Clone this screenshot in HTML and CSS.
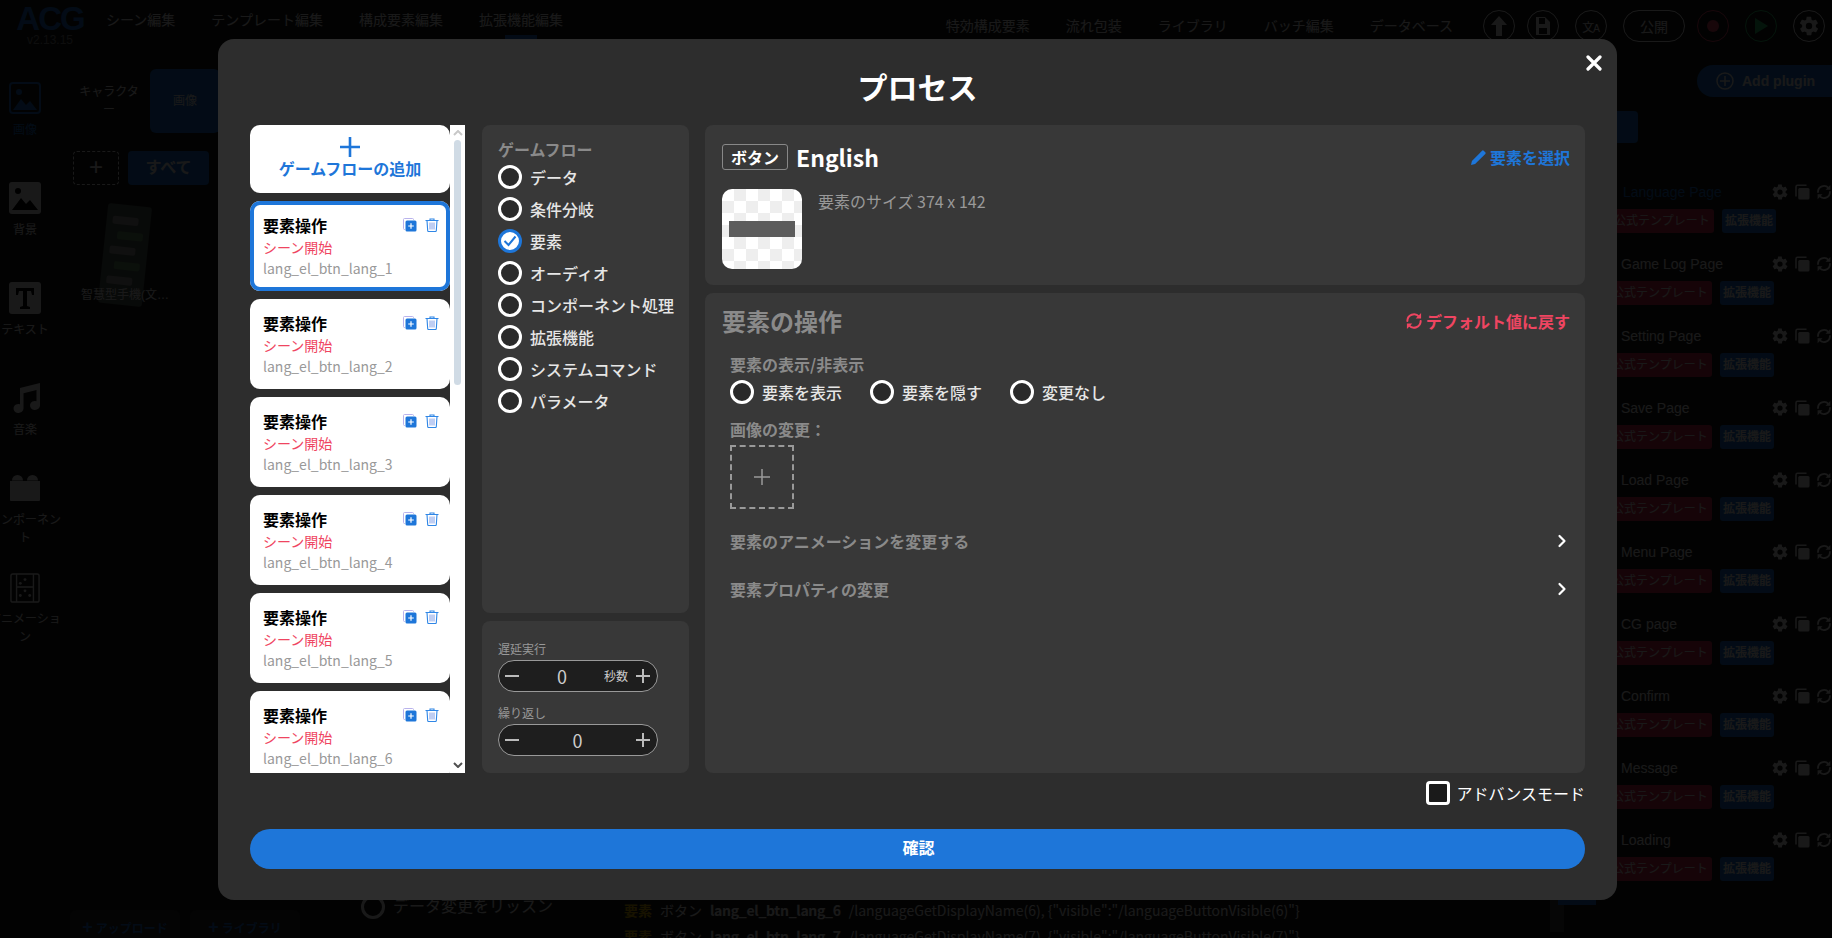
FILE: index.html
```html
<!DOCTYPE html>
<html lang="ja">
<head>
<meta charset="utf-8">
<title>プロセス</title>
<link rel="stylesheet" href="styles.css">
</head>
<body>
<svg class="defs" width="0" height="0" aria-hidden="true">
  <defs>
    <symbol id="gear" viewBox="0 0 24 24"><path fill="currentColor" d="M19.4 13c.1-.3.1-.7.1-1s0-.7-.1-1l2.1-1.6c.2-.2.2-.4.1-.6l-2-3.5c-.1-.2-.4-.3-.6-.2l-2.5 1c-.5-.4-1.1-.7-1.7-1l-.4-2.6c0-.3-.2-.5-.5-.5h-4c-.3 0-.5.2-.5.4l-.4 2.7c-.6.2-1.2.6-1.7 1l-2.5-1c-.2-.1-.5 0-.6.2l-2 3.5c-.1.2-.1.5.1.6L4.6 11c-.1.3-.1.7-.1 1s0 .7.1 1l-2.1 1.600c-.2.2-.2.4-.1.6l2 3.5c.1.2.4.3.6.2l2.5-1c.5.4 1.1.7 1.700 1l.4 2.600c0 .3.2.5.5.5h4c.3 0 .5-.2.5-.4l.4-2.700c.6-.2 1.2-.6 1.700-1l2.500 1c.2.1.5 0 .6-.2l2-3.500c.1-.2.1-.5-.1-.6zM12 15.500a3.500 3.500 0 1 1 0-7 3.500 3.500 0 0 1 0 7z"/></symbol>
    <symbol id="refresh" viewBox="0 0 24 24"><path fill="none" stroke="currentColor" stroke-width="2.400" stroke-linecap="round" d="M4 12a8 8 0 0 1 14-5.300M20 12a8 8 0 0 1-14 5.300"/><path fill="currentColor" d="M20.500 2.500v6.500H14zM3.500 21.500V15H10z"/></symbol>
    <symbol id="copy" viewBox="0 0 24 24"><path fill="none" stroke="currentColor" stroke-width="2" d="M4 18V5a2 2 0 0 1 2-2h12"/><rect x="7" y="6.500" width="15" height="15.500" rx="2" fill="currentColor"/></symbol>
    <symbol id="copyblue" viewBox="0 0 14 14"><path fill="none" stroke="#b9b3ec" stroke-width="1" d="M2 11.500H1.500a1 1 0 0 1-1-1v-9a1 1 0 0 1 1-1h8a1 1 0 0 1 1 1V2"/><rect x="2.500" y="2.500" width="11" height="11" rx="1.500" fill="#1e76d9"/><path stroke="#fff" stroke-width="1.200" d="M8 5.200v5.600M5.200 8h5.600"/></symbol>
    <symbol id="trash" viewBox="0 0 14 14"><path fill="none" stroke="#2f86e6" stroke-width="1.100" d="M.5 2.500h13M5 2.500V1h4v1.500M2 2.500l.7 10.300c0 .4.400.7.800.7h7c.4 0 .8-.3.8-.7L12 2.500"/><path stroke="#7f9ce6" stroke-width="1" d="M5 4.500v7M7 4.500v7M9 4.500v7"/></symbol>
    <symbol id="chev" viewBox="0 0 12 16"><path fill="none" stroke="currentColor" stroke-width="2.200" stroke-linecap="round" stroke-linejoin="round" d="M3.500 3l5 5-5 5"/></symbol>
  </defs>
</svg>

<div class="app">
  <header class="topbar">
    <div class="logo">
      <span class="logo-mark">ACG</span>
      <span class="logo-ver">v2.13.15</span>
    </div>
    <nav class="nav-left">
      <span>シーン編集</span>
      <span>テンプレート編集</span>
      <span>構成要素編集</span>
      <span class="nav-active">拡張機能編集</span>
    </nav>
    <nav class="nav-right">
      <span>特効構成要素</span>
      <span>流れ包装</span>
      <span>ライブラリ</span>
      <span>バッチ編集</span>
      <span>データベース</span>
    </nav>
    <div class="tools">
      <span class="tool tool-tight"><svg width="18" height="22" viewBox="0 0 18 22"><path fill="currentColor" d="M9 1l8 9h-5v11H6V10H1z"/></svg></span>
      <span class="tool"><svg width="16" height="20" viewBox="0 0 16 20"><path fill="currentColor" fill-rule="evenodd" d="M1 1h9l5 5v13H1zM4 2v6h6V2zM4 12v6h8v-6z"/></svg></span>
      <span class="tool tool-text">文<small>A</small></span>
      <span class="tool tool-pub tool-tight">公開</span>
      <span class="tool tool-red"><svg width="14" height="14" viewBox="0 0 14 14"><circle cx="7" cy="7" r="6" fill="currentColor"/></svg></span>
      <span class="tool tool-green"><svg width="16" height="18" viewBox="0 0 16 18"><path fill="currentColor" d="M2 1l13 8-13 8z"/></svg></span>
      <span class="tool"><svg width="22" height="22"><use href="#gear"/></svg></span>
    </div>
  </header>

  <div class="workspace">
    <aside class="rail">
      <div class="rail-item rail-on">
        <svg width="32" height="32" viewBox="0 0 32 32"><rect x="1" y="1" width="30" height="30" rx="3" fill="none" stroke="currentColor" stroke-width="2"/><circle cx="10" cy="10" r="3" fill="currentColor"/><path fill="currentColor" d="M4 28l8-11 5 6 4-4 7 9z"/></svg>
        <span>画像</span>
      </div>
      <div class="rail-item">
        <svg width="32" height="32" viewBox="0 0 32 32"><rect width="32" height="32" rx="3" fill="currentColor"/><circle cx="9" cy="9" r="3" fill="#000"/><path fill="#000" d="M3 28l9-12 5 6 4-4 8 10z"/></svg>
        <span>背景</span>
      </div>
      <div class="rail-item">
        <svg width="32" height="32" viewBox="0 0 32 32"><rect width="32" height="32" rx="3" fill="currentColor"/><path fill="#000" d="M7 6h18v7h-2l-1-4h-4v15l3 1v2H11v-2l3-1V9h-4l-1 4H7z"/></svg>
        <span>テキスト</span>
      </div>
      <div class="rail-item rail-short">
        <svg width="32" height="32" viewBox="0 0 32 32"><path fill="currentColor" d="M11 6l20-5v22.500a5 4.500 0 1 1-3.500-4.300V8l-13 3.200v15.300a5 4.500 0 1 1-3.500-4.300z"/></svg>
        <span>音楽</span>
      </div>
      <div class="rail-item rail-lego">
        <svg width="30" height="26" viewBox="0 3 30 26"><path fill="currentColor" d="M0 9h30v19a1 1 0 0 1-1 1H1a1 1 0 0 1-1-1zM2 8.500a5.500 5.500 0 0 1 11 0zM17 8.500a5.500 5.500 0 0 1 11 0z"/></svg>
        <span>コンポーネント</span>
      </div>
      <div class="rail-item">
        <svg width="30" height="30" viewBox="0 0 32 32"><rect x="1" y="1" width="30" height="30" rx="2" fill="none" stroke="currentColor" stroke-width="1.500"/><path stroke="currentColor" stroke-width="1.500" d="M7 1v30M25 1v30M7 15h18"/><circle cx="16" cy="7" r="1.500" fill="currentColor"/><circle cx="11" cy="11" r="1.500" fill="currentColor"/><circle cx="16" cy="19" r="1.500" fill="currentColor"/><circle cx="11" cy="24" r="1.500" fill="currentColor"/><circle cx="21" cy="24" r="1.500" fill="currentColor"/></svg>
        <span>アニメーション</span>
      </div>
    </aside>

    <section class="assets">
      <div class="asset-tabs">
        <span class="asset-tab">キャラクター</span>
        <span class="asset-tab asset-tab-on">画像</span>
      </div>
      <div class="asset-filter">
        <span class="asset-add">+</span>
        <span class="asset-all">すべて</span>
      </div>
      <div class="asset-thumb">
        <div class="phone"><i></i><i class="bubble-green"></i><i></i><i class="bubble-green"></i><i></i></div>
        <span class="asset-name">智慧型手機(文…</span>
      </div>
      <div class="asset-actions">
        <span class="asset-btn"><b class="asset-plus">+</b>アップロード</span>
        <span class="asset-btn"><b class="asset-plus">+</b>ライブラリ</span>
      </div>
    </section>

    <section class="logs">
      <div class="listen"><span class="listen-radio"></span>データ変更をリッスン</div>
      <div class="log-lines">
        <p class="log-line"><b class="log-key">要素</b><span>ボタン</span><b class="log-id">lang_el_btn_lang_6</b><span>/languageGetDisplayName(6), {"visible":"/languageButtonVisible(6)"}</span></p>
        <p class="log-line"><b class="log-key">要素</b><span>ボタン</span><b class="log-id">lang_el_btn_lang_7</b><span>/languageGetDisplayName(7), {"visible":"/languageButtonVisible(7)"}</span></p>
      </div>
      <div class="log-scroll"></div>
      <div class="log-blue"></div>
    </section>

    <aside class="plugins">
      <div class="add-plugin">
        <svg width="18" height="18" viewBox="0 0 18 18"><circle cx="9" cy="9" r="8" fill="none" stroke="currentColor" stroke-width="1.500"/><path stroke="currentColor" stroke-width="1.500" d="M9 4v10M4 9h10"/></svg>
        <span>Add plugin</span>
      </div>
      <div class="plugin-blue"></div>
      <div class="plugin-list">
        <div class="plugin plugin-first">
          <div class="plugin-head"><span class="plugin-name plugin-name-on">Language Page</span><svg width="18" height="18"><use href="#gear"/></svg><svg width="18" height="18"><use href="#copy"/></svg><svg width="18" height="18"><use href="#refresh"/></svg></div>
          <div class="plugin-tags"><span class="tag-red">公式テンプレート</span><span class="tag-blue">拡張機能</span></div>
        </div>
        <div class="plugin">
          <div class="plugin-head"><span class="plugin-name">Game Log Page</span><svg width="18" height="18"><use href="#gear"/></svg><svg width="18" height="18"><use href="#copy"/></svg><svg width="18" height="18"><use href="#refresh"/></svg></div>
          <div class="plugin-tags"><span class="tag-red">公式テンプレート</span><span class="tag-blue">拡張機能</span></div>
        </div>
        <div class="plugin">
          <div class="plugin-head"><span class="plugin-name">Setting Page</span><svg width="18" height="18"><use href="#gear"/></svg><svg width="18" height="18"><use href="#copy"/></svg><svg width="18" height="18"><use href="#refresh"/></svg></div>
          <div class="plugin-tags"><span class="tag-red">公式テンプレート</span><span class="tag-blue">拡張機能</span></div>
        </div>
        <div class="plugin">
          <div class="plugin-head"><span class="plugin-name">Save Page</span><svg width="18" height="18"><use href="#gear"/></svg><svg width="18" height="18"><use href="#copy"/></svg><svg width="18" height="18"><use href="#refresh"/></svg></div>
          <div class="plugin-tags"><span class="tag-red">公式テンプレート</span><span class="tag-blue">拡張機能</span></div>
        </div>
        <div class="plugin">
          <div class="plugin-head"><span class="plugin-name">Load Page</span><svg width="18" height="18"><use href="#gear"/></svg><svg width="18" height="18"><use href="#copy"/></svg><svg width="18" height="18"><use href="#refresh"/></svg></div>
          <div class="plugin-tags"><span class="tag-red">公式テンプレート</span><span class="tag-blue">拡張機能</span></div>
        </div>
        <div class="plugin">
          <div class="plugin-head"><span class="plugin-name">Menu Page</span><svg width="18" height="18"><use href="#gear"/></svg><svg width="18" height="18"><use href="#copy"/></svg><svg width="18" height="18"><use href="#refresh"/></svg></div>
          <div class="plugin-tags"><span class="tag-red">公式テンプレート</span><span class="tag-blue">拡張機能</span></div>
        </div>
        <div class="plugin">
          <div class="plugin-head"><span class="plugin-name">CG page</span><svg width="18" height="18"><use href="#gear"/></svg><svg width="18" height="18"><use href="#copy"/></svg><svg width="18" height="18"><use href="#refresh"/></svg></div>
          <div class="plugin-tags"><span class="tag-red">公式テンプレート</span><span class="tag-blue">拡張機能</span></div>
        </div>
        <div class="plugin">
          <div class="plugin-head"><span class="plugin-name">Confirm</span><svg width="18" height="18"><use href="#gear"/></svg><svg width="18" height="18"><use href="#copy"/></svg><svg width="18" height="18"><use href="#refresh"/></svg></div>
          <div class="plugin-tags"><span class="tag-red">公式テンプレート</span><span class="tag-blue">拡張機能</span></div>
        </div>
        <div class="plugin">
          <div class="plugin-head"><span class="plugin-name">Message</span><svg width="18" height="18"><use href="#gear"/></svg><svg width="18" height="18"><use href="#copy"/></svg><svg width="18" height="18"><use href="#refresh"/></svg></div>
          <div class="plugin-tags"><span class="tag-red">公式テンプレート</span><span class="tag-blue">拡張機能</span></div>
        </div>
        <div class="plugin">
          <div class="plugin-head"><span class="plugin-name">Loading</span><svg width="18" height="18"><use href="#gear"/></svg><svg width="18" height="18"><use href="#copy"/></svg><svg width="18" height="18"><use href="#refresh"/></svg></div>
          <div class="plugin-tags"><span class="tag-red">公式テンプレート</span><span class="tag-blue">拡張機能</span></div>
        </div>
      </div>
    </aside>
  </div>
</div>

<div class="overlay">
  <div class="modal">
    <button class="close" type="button" aria-label="閉じる"><svg width="16" height="16" viewBox="0 0 16 16"><path stroke="#fff" stroke-width="3.200" stroke-linecap="round" d="M2 2l12 12M14 2L2 14"/></svg></button>
    <h1 class="modal-title">プロセス</h1>
    <div class="modal-body">
      <div class="flow-list">
        <div class="flow-items">
          <div class="flow-add">
            <svg width="20" height="20" viewBox="0 0 20 20"><path stroke="#1e76d9" stroke-width="2.600" d="M10 0v20M0 10h20"/></svg>
            <span>ゲームフローの追加</span>
          </div>
          <div class="flow-card flow-card-on">
            <div class="flow-top"><b>要素操作</b><span class="flow-icons"><svg width="14" height="14"><use href="#copyblue"/></svg><svg width="14" height="14"><use href="#trash"/></svg></span></div>
            <div class="flow-scene">シーン開始</div>
            <div class="flow-name">lang_el_btn_lang_1</div>
          </div>
          <div class="flow-card">
            <div class="flow-top"><b>要素操作</b><span class="flow-icons"><svg width="14" height="14"><use href="#copyblue"/></svg><svg width="14" height="14"><use href="#trash"/></svg></span></div>
            <div class="flow-scene">シーン開始</div>
            <div class="flow-name">lang_el_btn_lang_2</div>
          </div>
          <div class="flow-card">
            <div class="flow-top"><b>要素操作</b><span class="flow-icons"><svg width="14" height="14"><use href="#copyblue"/></svg><svg width="14" height="14"><use href="#trash"/></svg></span></div>
            <div class="flow-scene">シーン開始</div>
            <div class="flow-name">lang_el_btn_lang_3</div>
          </div>
          <div class="flow-card">
            <div class="flow-top"><b>要素操作</b><span class="flow-icons"><svg width="14" height="14"><use href="#copyblue"/></svg><svg width="14" height="14"><use href="#trash"/></svg></span></div>
            <div class="flow-scene">シーン開始</div>
            <div class="flow-name">lang_el_btn_lang_4</div>
          </div>
          <div class="flow-card">
            <div class="flow-top"><b>要素操作</b><span class="flow-icons"><svg width="14" height="14"><use href="#copyblue"/></svg><svg width="14" height="14"><use href="#trash"/></svg></span></div>
            <div class="flow-scene">シーン開始</div>
            <div class="flow-name">lang_el_btn_lang_5</div>
          </div>
          <div class="flow-card">
            <div class="flow-top"><b>要素操作</b><span class="flow-icons"><svg width="14" height="14"><use href="#copyblue"/></svg><svg width="14" height="14"><use href="#trash"/></svg></span></div>
            <div class="flow-scene">シーン開始</div>
            <div class="flow-name">lang_el_btn_lang_6</div>
          </div>
        </div>
        <div class="flow-scroll">
          <svg class="flow-arrow" width="10" height="6" viewBox="0 0 10 6"><path fill="none" stroke="#c8c8c8" stroke-width="2" d="M1 5l4-4 4 4"/></svg>
          <div class="flow-thumb"></div>
          <svg class="flow-arrow flow-arrow-down" width="10" height="6" viewBox="0 0 10 6"><path fill="none" stroke="#505050" stroke-width="2" d="M1 1l4 4 4-4"/></svg>
        </div>
      </div>

      <div class="mid">
        <div class="panel types">
          <div class="types-title">ゲームフロー</div>
          <label class="radio-row"><span class="radio"></span>データ</label>
          <label class="radio-row"><span class="radio"></span>条件分岐</label>
          <label class="radio-row"><span class="radio radio-on"><svg width="14" height="12" viewBox="0 0 14 12"><path fill="none" stroke="#1e76d9" stroke-width="2" d="M1.500 6l4 4 7-8.500"/></svg></span>要素</label>
          <label class="radio-row"><span class="radio"></span>オーディオ</label>
          <label class="radio-row"><span class="radio"></span>コンポーネント処理</label>
          <label class="radio-row"><span class="radio"></span>拡張機能</label>
          <label class="radio-row"><span class="radio"></span>システムコマンド</label>
          <label class="radio-row"><span class="radio"></span>パラメータ</label>
        </div>
        <div class="panel timing">
          <div class="step-label">遅延実行</div>
          <div class="stepper">
            <svg width="14" height="2"><rect width="14" height="2" fill="#bbb"/></svg>
            <span class="step-val step-val-left">0</span>
            <span class="step-unit">秒数</span>
            <svg width="14" height="14"><path stroke="#bbb" stroke-width="2" d="M7 0v14M0 7h14"/></svg>
          </div>
          <div class="step-label step-label-second">繰り返し</div>
          <div class="stepper">
            <svg width="14" height="2"><rect width="14" height="2" fill="#bbb"/></svg>
            <span class="step-val">0</span>
            <svg width="14" height="14"><path stroke="#bbb" stroke-width="2" d="M7 0v14M0 7h14"/></svg>
          </div>
        </div>
      </div>

      <div class="right">
        <div class="panel element">
          <div class="element-head">
            <span class="element-tag">ボタン</span>
            <span class="element-name">English</span>
            <span class="element-pick"><svg width="16" height="16" viewBox="0 0 14 14"><path fill="#1e76d9" d="M0 14l.8-3.600L9.700 1.500a1 1 0 0 1 1.400 0l1.400 1.400a1 1 0 0 1 0 1.400L3.600 13.200z"/></svg>要素を選択</span>
          </div>
          <div class="element-info">
            <div class="thumb"><div class="thumb-bar"></div></div>
            <span class="element-size">要素のサイズ 374 x 142</span>
          </div>
        </div>
        <div class="panel ops">
          <div class="ops-head">
            <h2>要素の操作</h2>
            <span class="ops-reset"><svg width="20" height="20"><use href="#refresh"/></svg>デフォルト値に戻す</span>
          </div>
          <div class="ops-label">要素の表示/非表示</div>
          <div class="ops-radios">
            <label class="radio-row"><span class="radio"></span>要素を表示</label>
            <label class="radio-row"><span class="radio"></span>要素を隠す</label>
            <label class="radio-row"><span class="radio"></span>変更なし</label>
          </div>
          <div class="ops-label ops-label-image">画像の変更：</div>
          <div class="upload"><svg width="16" height="16"><path stroke="#999" stroke-width="1.500" d="M8 0v16M0 8h16"/></svg></div>
          <div class="ops-row ops-row-first"><span>要素のアニメーションを変更する</span><svg width="12" height="16"><use href="#chev"/></svg></div>
          <div class="ops-row ops-row-last"><span>要素プロパティの変更</span><svg width="12" height="16"><use href="#chev"/></svg></div>
        </div>
      </div>
    </div>
    <label class="advanced"><span class="check"></span>アドバンスモード</label>
    <button class="confirm" type="button">確認</button>
  </div>
</div>
</body>
</html>
```
FILE: styles.css
```css
* { box-sizing: border-box; }
html, body { margin: 0; height: 100%; overflow: hidden; }
body {
  background: #1a1a1a;
  color: #fff;
  font-family: "Liberation Sans", "Noto Sans CJK JP", sans-serif;
}
.defs { position: absolute; }

/* Dimmed application behind the dialog */
.app { height: 938px; display: flex; flex-direction: column; overflow: hidden; }
.topbar { height: 64px; flex: none; display: flex; align-items: flex-start; }
.logo { width: 106px; flex: none; display: flex; flex-direction: column; align-items: center; padding: 5px 6px 0 0; }
.logo-mark { font-size: 33px; line-height: 28px; font-weight: 700; color: #1e76d9; letter-spacing: -2px; }
.logo-ver { font-size: 12px; line-height: 14px; color: #888; }
.nav-left { display: flex; gap: 36px; font-size: 14px; line-height: 20px; padding-top: 10px; }
.nav-active { position: relative; }
.nav-active::after { content: ""; position: absolute; left: 26px; top: 25px; width: 32px; height: 12px; background: #1e76d9; }
.nav-right { margin-left: auto; display: flex; gap: 36px; font-size: 14px; line-height: 20px; padding: 16px 0 0; }
.tools { display: flex; gap: 16px; padding: 10px 7px 0 30px; }
.tool { width: 32px; height: 32px; border: 1px solid #fff; border-radius: 50%; display: flex; align-items: center; justify-content: center; font-size: 14px; }
.tool-tight { margin-right: -4px; }
.tool-text { font-size: 12px; }
.tool-text small { font-size: 10px; margin: 5px 0 0 -1px; }
.tool-pub { width: 62px; border-radius: 16px; }
.tool-red { color: #f0476a; border-color: #f0476a; }
.tool-green { color: #2ecc71; border-color: #2ecc71; }

.workspace { flex: 1; display: flex; min-height: 0; }
.rail { width: 65px; flex: none; display: flex; flex-direction: column; padding: 18px 0 0 9px; }
.rail-item { width: 32px; height: 100px; flex: none; display: flex; flex-direction: column; align-items: center; color: #fff; }
.rail-item svg { flex: none; }
.rail-item span { width: 72px; flex: none; font-size: 12px; line-height: 18px; text-align: center; margin-top: 7px; }
.rail-short { height: 93px; }
.rail-lego { height: 98px; }
.rail-lego span { margin-top: 10px; }
.rail-on { color: #1e76d9; }

.assets { width: 250px; flex: none; display: flex; flex-direction: column; padding-left: 8px; }
.asset-tabs { display: flex; align-items: center; height: 64px; margin-top: 5px; }
.asset-tab { width: 72px; text-align: center; font-size: 12px; line-height: 18px; padding: 0 6px; }
.asset-tab-on { width: 70px; height: 64px; line-height: 64px; background: #1e76d9; border-radius: 6px; margin-left: 5px; }
.asset-filter { display: flex; gap: 9px; margin-top: 18px; }
.asset-add { width: 46px; height: 34px; border: 1px dashed #fff; border-radius: 4px; text-align: center; font-size: 24px; line-height: 30px; }
.asset-all { width: 81px; height: 34px; background: #1e76d9; border-radius: 4px; text-align: center; font-size: 16px; font-weight: 700; line-height: 34px; }
.asset-thumb { margin-top: 20px; width: 110px; margin-left: -3px; display: flex; flex-direction: column; align-items: center; height: 115px; }
.phone { width: 44px; height: 100px; flex: none; background: #55635a; border-radius: 3px; transform: rotate(6deg); display: flex; flex-direction: column; gap: 7px; padding: 12px 6px 0; }
.phone i { display: block; height: 8px; width: 26px; background: #a0a0a0; border-radius: 2px; }
.phone .bubble-green { margin-left: 6px; background: #6f9f6f; }
.asset-name { font-size: 12px; line-height: 18px; white-space: nowrap; margin-top: -19px; position: relative; }
.asset-actions { margin-top: auto; margin-left: -3px; display: flex; gap: 10px; height: 28px; }
.asset-btn { width: 110px; font-size: 12px; font-weight: 700; color: #1e76d9; text-align: center; line-height: 34px; background: #2a2a2a; border-radius: 6px 6px 0 0; white-space: nowrap; }
.asset-plus { font-size: 18px; margin-right: 3px; }

.logs { flex: 1; display: flex; align-items: flex-end; min-width: 0; position: relative; padding-left: 46px; }
.listen { display: flex; align-items: center; gap: 8px; font-size: 16px; line-height: 24px; width: 263px; flex: none; margin-bottom: 19px; }
.listen-radio { width: 24px; height: 24px; border: 3px solid #fff; border-radius: 50%; flex: none; }
.log-lines { flex: 1; min-width: 0; height: 38px; overflow: hidden; font-family: "Noto Sans CJK JP", sans-serif; }
.log-line { margin: 0 0 6px; font-size: 14px; line-height: 20px; display: flex; gap: 8px; white-space: nowrap; }
.log-key { color: #e6b800; }
.log-id { letter-spacing: -.3px; }
.log-scroll { width: 14px; height: 60px; background: #3c3c3c; flex: none; margin: 0 40px 6px 0; }
.log-blue { position: absolute; right: 8px; bottom: 33px; width: 38px; height: 10px; background: #1e76d9; }

.plugins { width: 228px; flex: none; display: flex; flex-direction: column; padding-left: 13px; }
.add-plugin { height: 32px; margin: 1px 0 0 80px; padding-left: 19px; display: flex; align-items: center; gap: 8px; background: #1e76d9; border-radius: 16px 0 0 16px; font-size: 14px; font-weight: 700; }
.plugin-blue { width: 21px; height: 32px; margin-top: 14px; background: #1e76d9; border-radius: 0 4px 4px 0; }
.plugin-list { padding-top: 37px; display: flex; flex-direction: column; }
.plugin { height: 72px; flex: none; }
.plugin-head { display: flex; align-items: center; gap: 4px; height: 24px; }
.plugin-head > * { flex: none; }
.plugin-name { width: 150px; padding-left: 4px; font-size: 14px; line-height: 24px; white-space: nowrap; }
.plugin-name-on { color: #1e76d9; padding-left: 6px; }
.plugin-tags { display: flex; gap: 8px; margin-top: 5px; margin-left: -9px; }
.plugin-first .plugin-tags { margin-left: -7px; }
.tag-red, .tag-blue { height: 24px; border-radius: 3px; font-size: 12px; line-height: 24px; padding: 0 3px; white-space: nowrap; }
.tag-red { width: 104px; padding: 0 4px; background: #e03050; }
.tag-blue { background: #1e76d9; font-weight: 700; }

/* Dialog */
.overlay { position: fixed; inset: 0; background: rgba(0,0,0,.9); display: flex; align-items: center; justify-content: center; padding-left: 3px; font-family: "Noto Sans CJK JP", sans-serif; }
.modal { position: relative; width: 1399px; height: 861px; background: #2d2d2d; border-radius: 16px; padding: 0 32px; display: flex; flex-direction: column; }
.close { position: absolute; top: 16px; right: 15px; width: 16px; height: 16px; padding: 0; border: 0; background: none; display: flex; }
.modal-title { margin: 0; height: 86px; flex: none; font-size: 30px; font-weight: 700; line-height: 86px; text-align: center; padding-top: 4px; color: #fff; }
.modal-body { height: 648px; flex: none; display: flex; }

.flow-list { width: 215px; flex: none; margin-right: 17px; display: flex; height: 100%; }
.flow-items { width: 200px; flex: none; height: 100%; overflow: hidden; display: flex; flex-direction: column; gap: 8px; }
.flow-add { height: 68px; flex: none; background: #fff; border-radius: 10px; display: flex; flex-direction: column; align-items: center; padding-top: 12px; color: #1e76d9; font-size: 16px; font-weight: 700; line-height: 24px; }
.flow-add svg { flex: none; }
.flow-add span { margin-top: -1px; }
.flow-card { height: 90px; flex: none; background: #fff; border-radius: 10px; padding: 13px 11px 0 13px; color: #000; }
.flow-card-on { box-shadow: inset 0 0 0 4px #1e76d9; }
.flow-top { display: flex; justify-content: space-between; align-items: flex-start; height: 23px; }
.flow-top b { font-size: 16px; font-weight: 700; line-height: 22px; }
.flow-icons { display: flex; gap: 8px; padding-top: 4px; }
.flow-scene { font-size: 14px; line-height: 21px; color: #ef4561; }
.flow-name { font-size: 14px; line-height: 21px; color: #999; }
.flow-scroll { width: 15px; flex: none; background: #fff; display: flex; flex-direction: column; align-items: center; padding-top: 5px; }
.flow-arrow { flex: none; }
.flow-thumb { width: 7px; height: 245px; margin-top: 4px; background: #d0dbe5; border-radius: 4px; flex: none; }
.flow-arrow-down { margin-top: auto; margin-bottom: 5px; }

.panel { background: #383838; border-radius: 8px; }
.mid { width: 207px; flex: none; margin-right: 16px; display: flex; flex-direction: column; gap: 8px; }
.types { height: 488px; flex: none; padding: 12px 16px 0; }
.types-title { font-size: 16px; font-weight: 700; line-height: 24px; color: #8a8a8a; }
.radio-row { height: 32px; display: flex; align-items: center; gap: 8px; font-size: 16px; font-weight: 500; color: #e6e6e6; white-space: nowrap; }
.radio { width: 24px; height: 24px; flex: none; border: 3px solid #fff; border-radius: 50%; background: #2a2a2a; display: flex; align-items: center; justify-content: center; }
.radio-on { border-color: #1e76d9; background: #fff; }
.timing { flex: 1; padding: 17px 16px 0; }
.step-label { font-size: 12px; line-height: 22px; color: #999; }
.step-label-second { margin-top: 10px; }
.stepper { width: 160px; height: 32px; padding: 0 7px 0 6px; background: #1e1e1e; border: 1px solid #999; border-radius: 16px; display: flex; align-items: center; justify-content: space-between; color: #ccc; }
.step-val { font-size: 18px; line-height: 30px; }
.step-val-left { margin-left: 21px; }
.step-unit { font-size: 12px; margin-left: 20px; margin-right: -9px; }

.right { flex: 1; min-width: 0; display: flex; flex-direction: column; gap: 8px; }
.element { height: 160px; flex: none; padding: 19px 15px 0 17px; }
.element-head { display: flex; align-items: center; height: 26px; }
.element-tag { width: 66px; height: 26px; border: 1px solid #888; border-radius: 3px; text-align: center; font-size: 16px; font-weight: 700; line-height: 24px; }
.element-name { margin-left: 8px; font-size: 23px; font-weight: 700; line-height: 26px; }
.element-pick { margin-left: auto; display: flex; align-items: center; gap: 3px; color: #1e76d9; font-size: 16px; font-weight: 700; }
.element-info { display: flex; margin-top: 19px; }
.thumb { width: 80px; height: 80px; flex: none; border-radius: 10px; background: repeating-conic-gradient(#eee 0 25%, #fff 0 50%) 0 0 / 24px 24px; display: flex; align-items: center; justify-content: center; }
.thumb-bar { width: 66px; height: 16px; background: #5c5c5c; filter: blur(.6px); }
.element-size { margin-left: 16px; font-size: 16px; line-height: 24px; color: #999; }

.ops { flex: 1; padding: 12px 15px 0 17px; }
.ops-head { display: flex; align-items: center; justify-content: space-between; height: 32px; }
.ops-head h2 { margin: 0; font-size: 24px; font-weight: 700; line-height: 32px; color: #8a8a8a; }
.ops-reset { display: flex; align-items: center; gap: 2px; font-size: 16px; font-weight: 700; color: #ef4561; }
.ops-label { margin: 15px 0 0 8px; font-size: 16px; font-weight: 700; line-height: 24px; color: #8a8a8a; }
.ops-radios { display: flex; margin-left: 8px; height: 30px; margin-top: 1px; gap: 28px; }
.ops-radios .radio-row { height: 30px; }
.ops-label-image { margin-top: 10px; }
.upload { width: 64px; height: 64px; margin: 4px 0 0 8px; border: 2px dashed #999; display: flex; align-items: center; justify-content: center; }
.ops-row { margin: 0 0 0 8px; padding: 0 2px 0 0; height: 47px; display: flex; align-items: center; justify-content: space-between; font-size: 16px; font-weight: 700; color: #8a8a8a; }
.ops-row svg { color: #fff; }
.ops-row-first { margin-top: 9px; }
.ops-row-last { height: 48px; }

.advanced { height: 24px; margin-top: 8px; align-self: flex-end; display: flex; align-items: center; gap: 7px; font-size: 16px; color: #fff; white-space: nowrap; }
.check { width: 24px; height: 24px; border: 3px solid #fff; border-radius: 4px; background: #1a1a1a; }
.confirm { height: 40px; margin-top: 24px; flex: none; border: 0; border-radius: 20px; padding: 0 0 3px 2px; background: #1e76d9; color: #fff; font-family: inherit; font-size: 16px; font-weight: 700; }
```
